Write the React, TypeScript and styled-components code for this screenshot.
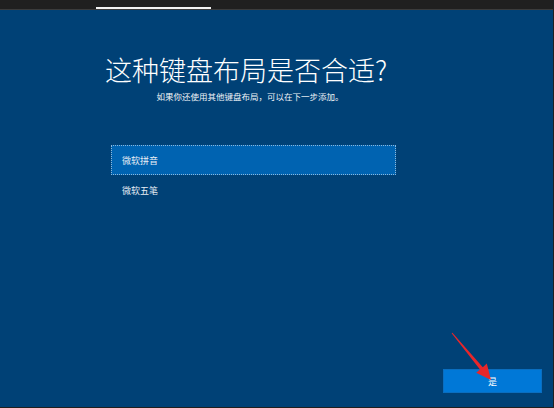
import React from "react"
import styled, { createGlobalStyle } from "styled-components"

const GlobalStyle = createGlobalStyle`
  html, body {
    margin: 0;
    padding: 0;
    background: #1f1f1f;
  }
  * {
    box-sizing: border-box;
  }
`

const Frame = styled.div`
  position: relative;
  width: 554px;
  height: 408px;
  display: flex;
  flex-direction: column;
  background: #1f1f1f;
  border-right: 1px solid #1f1f1f;
  border-bottom: 1px solid #1f1f1f;
  font-family: "Noto Sans CJK SC", "Noto Sans", sans-serif;
  color: #fff;
  overflow: hidden;
`

const TopBar = styled.div`
  height: 10px;
  display: flex;
  align-items: flex-end;
  background: #1f1f1f;
  border-bottom: 1px solid #3b3b3b;
`

const Progress = styled.div`
  margin-left: 96px;
  width: 115px;
  height: 2px;
  background: #f2f2f2;
`

const Main = styled.main`
  flex: 1;
  display: flex;
  flex-direction: column;
  background: #004176;
  padding: 0 11px 14px 0;
`

const Content = styled.div`
  margin-left: 111px;
  width: 285px;
`

const Header = styled.div`
  width: 290px;
  margin: 44px 0 0 -6px;
  text-align: center;
`

const Title = styled.h1`
  margin: 0;
  padding-right: 10px;
  font-size: 27px;
  font-weight: 300;
  line-height: 32px;
  white-space: nowrap;
`

const Subtitle = styled.p`
  margin: 4px 0 0;
  font-size: 8.5px;
  line-height: 12px;
  color: #f0f4f8;
  white-space: nowrap;
`

const List = styled.ul`
  list-style: none;
  margin: 43px 0 0;
  padding: 0;
`

const Item = styled.li<{ selected?: boolean }>`
  height: 30px;
  display: flex;
  align-items: center;
  padding-left: 11px;
  font-size: 9px;
  color: #e8eef5;
  background: ${(props) => (props.selected ? "#0063b1" : "transparent")};
  outline: ${(props) =>
    props.selected ? "1px dotted rgba(255, 255, 255, 0.55)" : "none"};
  outline-offset: -1px;
`

const Footer = styled.div`
  margin-top: auto;
  display: flex;
  justify-content: flex-end;
`

const Button = styled.button`
  width: 99px;
  height: 24px;
  border: 1px solid #0a6ec0;
  background: #0078d7;
  color: #fff;
  font-family: inherit;
  font-size: 9px;
  padding: 0;
`

const Arrow = styled.svg`
  position: absolute;
  left: 0;
  top: 0;
  pointer-events: none;
`

const options = ["微软拼音", "微软五笔"]

const App = () => {
  return (
    <>
      <GlobalStyle />
      <Frame>
        <TopBar>
          <Progress />
        </TopBar>
        <Main>
          <Content>
            <Header>
              <Title>这种键盘布局是否合适?</Title>
              <Subtitle>如果你还使用其他键盘布局，可以在下一步添加。</Subtitle>
            </Header>
            <List>
              {options.map((name, i) => (
                <Item key={name} selected={i === 0}>
                  {name}
                </Item>
              ))}
            </List>
          </Content>
          <Footer>
            <Button>是</Button>
          </Footer>
        </Main>
        <Arrow width="554" height="408" viewBox="0 0 554 408">
          <polygon
            points="452.4,332.7 482.8,367.3 486.8,363.6 491,380 476.2,372.8 480,369.5 451.6,333.3"
            fill="#e8262a"
          />
        </Arrow>
      </Frame>
    </>
  )
}

export default App
